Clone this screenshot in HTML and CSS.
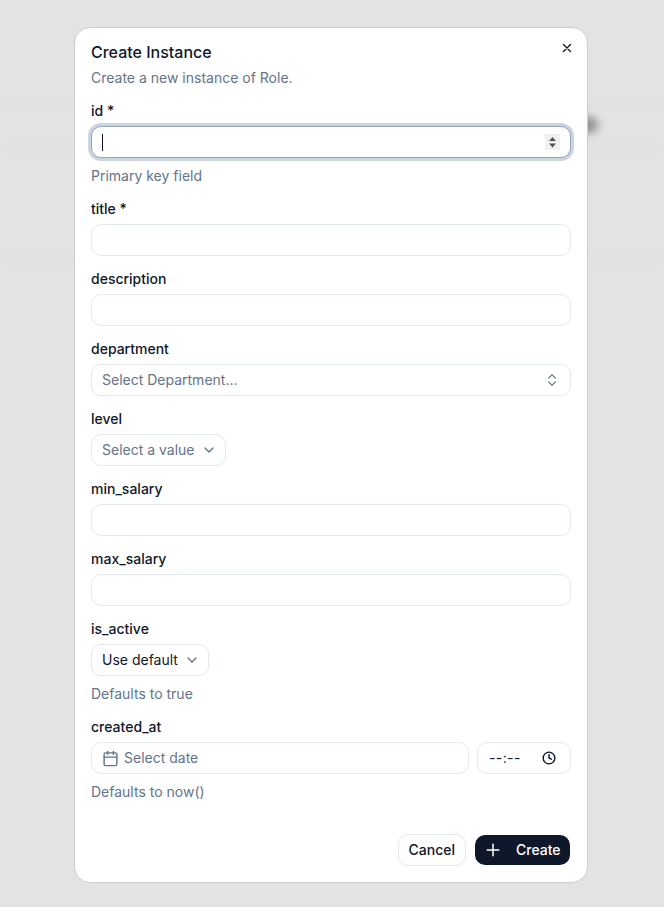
FILE: index.html
```html
<!DOCTYPE html>
<html lang="en">
<head>
    <meta charset="UTF-8">
    <meta name="viewport" content="width=device-width, initial-scale=1.0">
    <title>Create Instance</title>
    <link rel="stylesheet" href="styles.css">
</head>
<body>
    <!-- Blurred page behind the dialog -->
    <div class="backdrop-line line-a"></div>
    <div class="backdrop-line line-b"></div>
    <div class="backdrop-line line-c"></div>
    <div class="backdrop-blob"></div>

    <div class="dialog">
        <button class="close-btn" aria-label="Close">
            <svg width="10" height="10" viewBox="0 0 10 10" fill="none" stroke="#0f172a" stroke-width="1.4" stroke-linecap="round"><path d="M1.5 1.5l7 7M8.5 1.5l-7 7"/></svg>
        </button>

        <h2 class="dialog-title">Create Instance</h2>
        <p class="dialog-desc">Create a new instance of Role.</p>

        <form class="form">
            <div class="field">
                <label class="label">id *</label>
                <div class="input input-focus">
                    <span class="caret"></span>
                    <span class="spinner">
                        <svg width="15" height="16" viewBox="0 0 15 16" fill="#555"><path d="M7.5 3l3.5 4h-7zM7.5 13.5l-3.5-4h7z"/></svg>
                    </span>
                </div>
                <p class="hint">Primary key field</p>
            </div>

            <div class="field">
                <label class="label">title *</label>
                <input class="input" type="text">
            </div>

            <div class="field">
                <label class="label">description</label>
                <input class="input" type="text">
            </div>

            <div class="field">
                <label class="label">department</label>
                <button type="button" class="input select-full">
                    <span class="placeholder">Select Department...</span>
                    <svg class="chevrons" width="16" height="16" viewBox="0 0 24 24" fill="none" stroke="#64748b" stroke-width="2" stroke-linecap="round" stroke-linejoin="round"><path d="M7 15l5 5 5-5"/><path d="M7 9l5-5 5 5"/></svg>
                </button>
            </div>

            <div class="field">
                <label class="label">level</label>
                <button type="button" class="input select-small">
                    <span class="placeholder">Select a value</span>
                    <svg width="16" height="16" viewBox="0 0 24 24" fill="none" stroke="#64748b" stroke-width="2" stroke-linecap="round" stroke-linejoin="round"><path d="M6 9l6 6 6-6"/></svg>
                </button>
            </div>

            <div class="field">
                <label class="label">min_salary</label>
                <input class="input" type="text">
            </div>

            <div class="field">
                <label class="label">max_salary</label>
                <input class="input" type="text">
            </div>

            <div class="field">
                <label class="label">is_active</label>
                <button type="button" class="input select-small">
                    <span>Use default</span>
                    <svg width="16" height="16" viewBox="0 0 24 24" fill="none" stroke="#64748b" stroke-width="2" stroke-linecap="round" stroke-linejoin="round"><path d="M6 9l6 6 6-6"/></svg>
                </button>
                <p class="hint">Defaults to true</p>
            </div>

            <div class="field">
                <label class="label">created_at</label>
                <div class="date-row">
                    <button type="button" class="input date-btn">
                        <svg width="17" height="17" viewBox="0 0 24 24" fill="none" stroke="#64748b" stroke-width="2" stroke-linecap="round" stroke-linejoin="round"><path d="M8 2v4"/><path d="M16 2v4"/><rect x="3" y="4" width="18" height="18" rx="2"/><path d="M3 10h18"/></svg>
                        <span class="placeholder">Select date</span>
                    </button>
                    <div class="input time-box">
                        <span class="time-text">--:--</span>
                        <svg width="14" height="14" viewBox="0 0 24 24" fill="none" stroke="#0f172a" stroke-width="2.4" stroke-linecap="round" stroke-linejoin="round"><circle cx="12" cy="12" r="10"/><path d="M12 6v6l4 2"/></svg>
                    </div>
                </div>
                <p class="hint">Defaults to now()</p>
            </div>
        </form>

        <div class="footer">
            <button type="button" class="btn btn-outline">Cancel</button>
            <button type="button" class="btn btn-dark">
                <svg width="20" height="20" viewBox="0 0 24 24" fill="none" stroke="#fff" stroke-width="1.8" stroke-linecap="round"><path d="M5 12h14"/><path d="M12 5v14"/></svg>
                <span>Create</span>
            </button>
        </div>
    </div>
</body>
</html>
```

FILE: styles.css
```css
* {
    box-sizing: border-box;
}

html, body {
    height: 100%;
}

body {
    margin: 0;
    padding: 27px 0 0 74px;
    background-color: #e3e3e3;
    font-family: Inter, "Liberation Sans", sans-serif;
    font-size: 14px;
    line-height: 20px;
    color: #0f172a;
    position: relative;
    overflow: hidden;
}

/* Blurred page behind */
.backdrop-line {
    position: absolute;
    left: 0;
    right: 0;
    height: 6px;
    background-color: #dfe0e1;
    filter: blur(3px);
}

.line-a { top: 100px; }
.line-b { top: 145px; opacity: 0.6; }
.line-c { top: 256px; }

.backdrop-blob {
    position: absolute;
    top: 117px;
    left: 576px;
    width: 22px;
    height: 16px;
    border-radius: 8px;
    background-color: #8f8f91;
    filter: blur(4px);
}

/* Dialog */
.dialog {
    position: relative;
    width: 514px;
    height: 856px;
    padding: 16px;
    background-color: #fff;
    border: 1px solid #cdcdcd;
    border-radius: 16px;
}

.close-btn {
    position: absolute;
    top: 15px;
    right: 15px;
    width: 10px;
    height: 10px;
    padding: 0;
    border: none;
    background: none;
    display: flex;
}

.dialog-title {
    margin: 0;
    font-size: 16px;
    line-height: 16px;
    font-weight: 450;
}

.dialog-desc {
    margin: 8px 0 0;
    color: #64748b;
}

.form {
    margin-top: 13px;
    display: flex;
    flex-direction: column;
    gap: 13px;
}

.field {
    display: flex;
    flex-direction: column;
    align-items: flex-start;
}

.label {
    font-weight: 450;
    margin-bottom: 5px;
}

.hint {
    margin: 8px 0 0;
    color: #64748b;
}

/* Inputs */
.input {
    display: flex;
    align-items: center;
    width: 100%;
    height: 32px;
    padding: 0 10px;
    background-color: #fff;
    border: 1px solid #e2e8f0;
    border-radius: 10px;
    font: inherit;
    color: inherit;
    outline: none;
}

.input-focus {
    border-color: #94a3b8;
    box-shadow: 0 0 0 3px #cbd5e1;
    justify-content: space-between;
}

.caret {
    width: 1px;
    height: 17px;
    background-color: #0f172a;
}

.spinner {
    width: 15px;
    height: 16px;
    background-color: #f0f0f0;
    display: flex;
}

.placeholder {
    color: #64748b;
}

.select-full {
    justify-content: space-between;
}

.chevrons {
    opacity: 0.85;
}

.select-small {
    width: auto;
    gap: 6px;
    padding-right: 8px;
}

.date-row {
    display: flex;
    gap: 8px;
    width: 100%;
}

.date-btn {
    flex: 1;
    gap: 5px;
}

.time-box {
    width: 94px;
    flex: none;
    justify-content: space-between;
    padding: 0 14px 0 11px;
}

.time-text {
    letter-spacing: 0.4px;
}

/* Footer */
.footer {
    position: absolute;
    right: 17px;
    bottom: 16px;
    display: flex;
    gap: 9px;
    align-items: center;
}

.btn {
    display: flex;
    align-items: center;
    height: 32px;
    border-radius: 10px;
    font: inherit;
    font-weight: 450;
}

.btn-outline {
    padding: 0 10px;
    background-color: #fff;
    border: 1px solid #e2e8f0;
    color: #0f172a;
}

.btn-dark {
    height: 30px;
    width: 95px;
    padding: 0 8px;
    gap: 13px;
    background-color: #0f172a;
    border: none;
    color: #fff;
}
```
